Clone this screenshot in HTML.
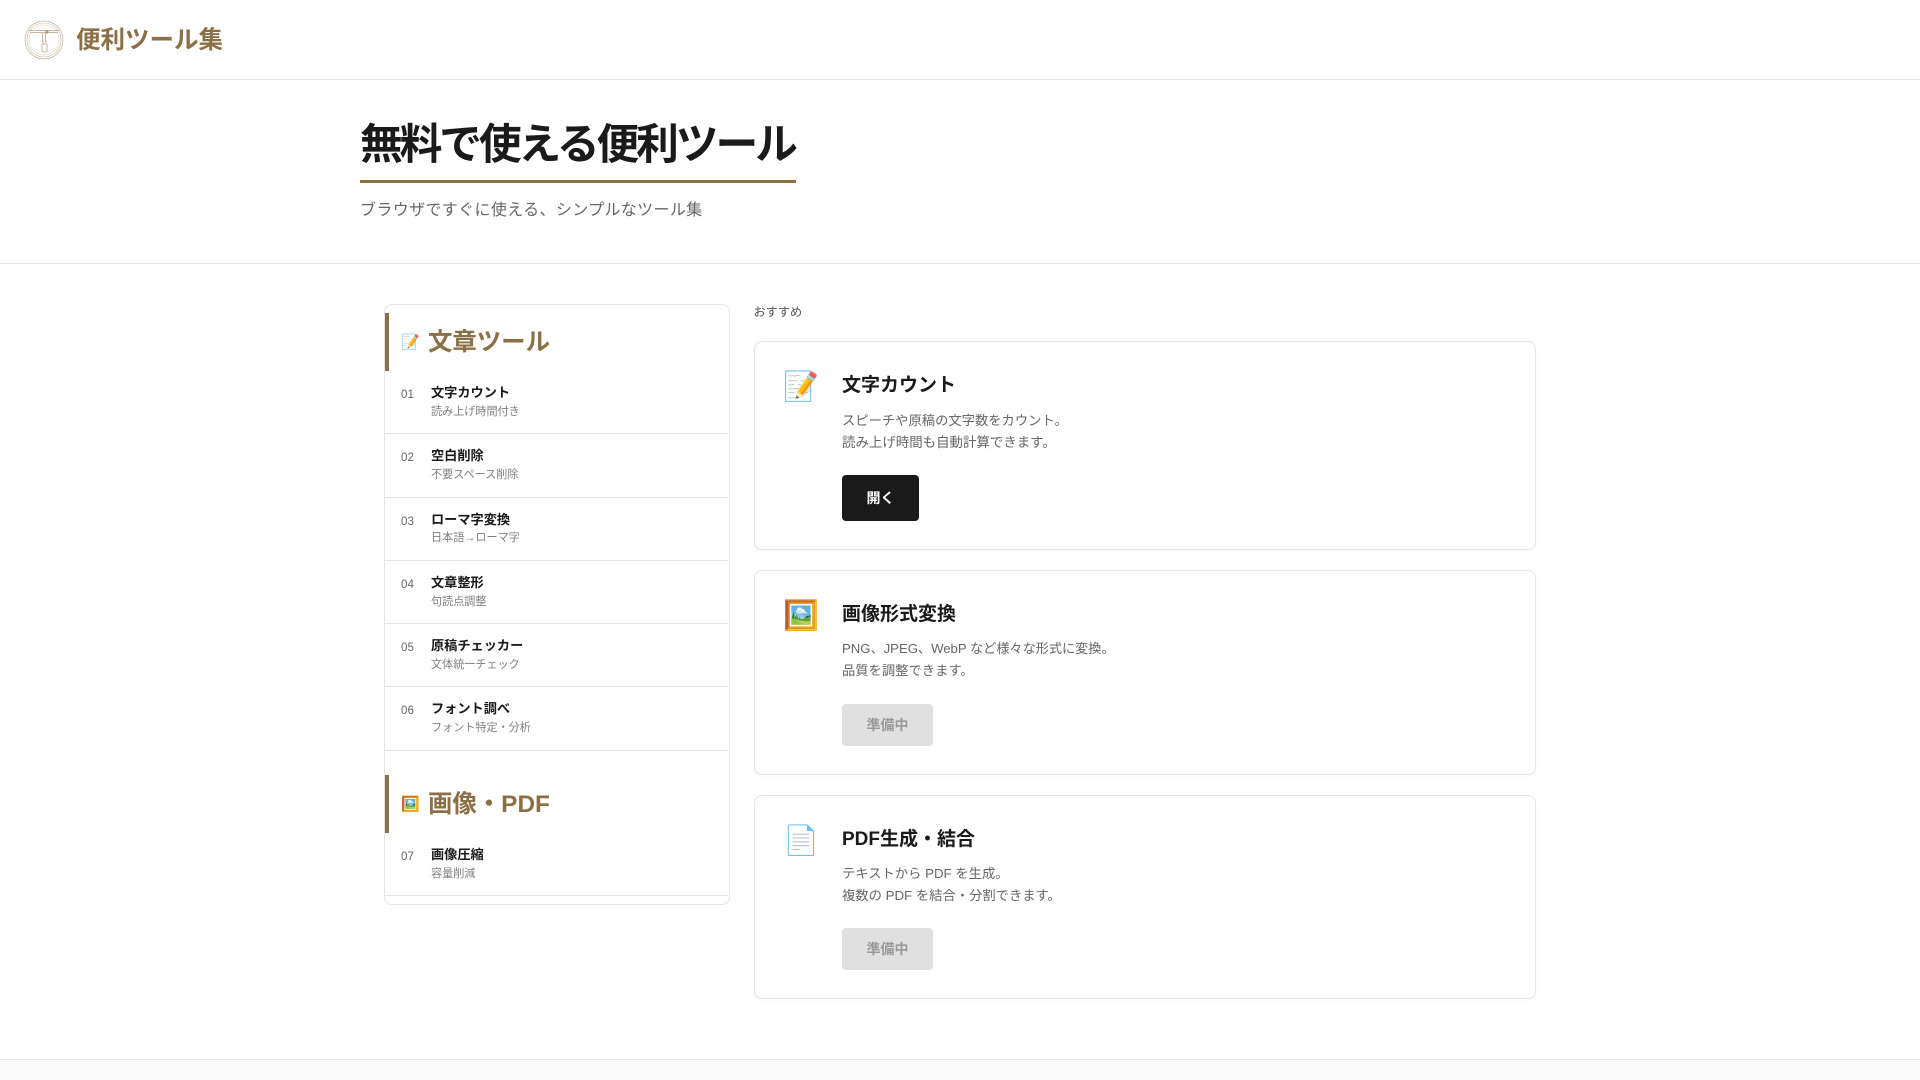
<!DOCTYPE html>
<html lang="ja">
<head>
<meta charset="utf-8">
<title>便利ツール集</title>
<style>
html,body{margin:0;padding:0;width:1920px;height:1080px;overflow:hidden;background:#fff}
body{position:relative;font-family:"Liberation Sans","Noto Sans CJK JP","Noto Color Emoji",sans-serif;color:#1a1a1a}
.a{position:absolute;white-space:nowrap}
.line{position:absolute;left:0;width:1920px;height:1px;background:#e5e5e5}
.side{position:absolute;left:384px;top:304px;width:344px;height:599px;border:1px solid #e5e5e5;border-radius:8px;background:#fff;box-sizing:content-box}
.bar{position:absolute;left:385px;width:4px;height:58px;background:#8b6f47}
.sh{color:#8b6f47;font-size:24.4px;font-weight:700;line-height:40px;left:428px}
.se{font-size:15px;line-height:20px;left:401px}
.num{left:401px;font-size:11.6px;line-height:14px;color:#666}
.nm{left:431px;font-size:13.2px;font-weight:700;line-height:18px;color:#1a1a1a}
.sb{left:431px;font-size:11.1px;line-height:16px;color:#808080}
.sep{position:absolute;left:385px;width:343px;height:1px;background:#e5e5e5}
.card{position:absolute;left:754px;width:780px;border:1px solid #e5e5e5;border-radius:8px;background:#fff;box-shadow:0 1px 3px rgba(0,0,0,.04)}
.ci{left:783px;font-size:28.8px;line-height:38px}
.ct{left:842px;font-size:19px;font-weight:700;line-height:28px;color:#1a1a1a}
.cd{left:842px;font-size:13.3px;line-height:22px;color:#666}
.btn{position:absolute;left:842px;border-radius:4px;text-align:center;font-size:14px;font-weight:700}
</style>
</head>
<body>
<svg class="a" style="left:24px;top:20px" width="40" height="40" viewBox="0 0 40 40" fill="none" stroke="#c9b89e">
<circle cx="20" cy="20" r="19" stroke-width=".8"/>
<circle cx="20" cy="20" r="17" stroke-width=".6"/>
<circle cx="20" cy="20" r="15" stroke-width=".4"/>
<path d="M5 10.5H35M6 12.5H34" stroke-width="1.1"/>
<path d="M18.5 12V22M21.5 12V22" stroke-width="1"/>
<rect x="18" y="24" width="5" height="8" rx="1" stroke-width="1.1"/>
<path d="M19 21L19 24M22 21L22 24" stroke-width=".9"/>
<circle cx="23" cy="12" r="1.6" fill="#b09a78" stroke="none"/>
</svg>
<div class="a" style="left:76px;top:25px;font-size:24.5px;font-weight:700;line-height:32px;color:#8b6f47">便利ツール集</div>
<div class="line" style="top:79px"></div>

<div class="a" style="left:360px;top:120px;font-size:42.8px;font-weight:700;line-height:50px;letter-spacing:-3.16px;color:#1a1a1a">無料で使える便利ツール</div>
<div style="position:absolute;left:360px;top:180px;width:436px;height:3px;background:#8b6f47"></div>
<div class="a" style="left:360px;top:199px;font-size:16px;line-height:24px;letter-spacing:.36px;color:#666">ブラウザですぐに使える、シンプルなツール集</div>
<div class="line" style="top:263px"></div>

<div class="side"></div>
<div class="bar" style="top:313px"></div>
<div class="a se" style="top:333px">📝</div>
<div class="a sh" style="top:323px">文章ツール</div>

<div class="a num" style="top:388px">01</div>
<div class="a nm" style="top:384px">文字カウント</div>
<div class="a sb" style="top:404px">読み上げ時間付き</div>
<div class="sep" style="top:433px"></div>

<div class="a num" style="top:451px">02</div>
<div class="a nm" style="top:447px">空白削除</div>
<div class="a sb" style="top:467px">不要スペース削除</div>
<div class="sep" style="top:497px"></div>

<div class="a num" style="top:515px">03</div>
<div class="a nm" style="top:511px">ローマ字変換</div>
<div class="a sb" style="top:530px">日本語→ローマ字</div>
<div class="sep" style="top:560px"></div>

<div class="a num" style="top:578px">04</div>
<div class="a nm" style="top:574px">文章整形</div>
<div class="a sb" style="top:594px">句読点調整</div>
<div class="sep" style="top:623px"></div>

<div class="a num" style="top:641px">05</div>
<div class="a nm" style="top:637px">原稿チェッカー</div>
<div class="a sb" style="top:657px">文体統一チェック</div>
<div class="sep" style="top:686px"></div>

<div class="a num" style="top:704px">06</div>
<div class="a nm" style="top:700px">フォント調べ</div>
<div class="a sb" style="top:720px">フォント特定・分析</div>
<div class="sep" style="top:750px"></div>

<div class="bar" style="top:775px"></div>
<div class="a se" style="top:795px">🖼️</div>
<div class="a sh" style="top:785px">画像・PDF</div>

<div class="a num" style="top:850px">07</div>
<div class="a nm" style="top:846px">画像圧縮</div>
<div class="a sb" style="top:866px">容量削減</div>
<div class="sep" style="top:895px"></div>

<div class="a" style="left:753.5px;top:304px;font-size:12.2px;line-height:16px;color:#555">おすすめ</div>

<div class="card" style="top:341px;height:207px"></div>
<div class="a ci" style="top:368px">📝</div>
<div class="a ct" style="top:372px">文字カウント</div>
<div class="a cd" style="top:410px">スピーチや原稿の文字数をカウント。</div>
<div class="a cd" style="top:432px;font-size:13.45px">読み上げ時間も自動計算できます。</div>
<div class="btn" style="top:475px;width:77px;height:46px;line-height:46px;background:#1a1a1a;color:#fff">開く</div>

<div class="card" style="top:570px;height:203px"></div>
<div class="a ci" style="top:597px">🖼️</div>
<div class="a ct" style="top:601px">画像形式変換</div>
<div class="a cd" style="top:638px;font-size:13.15px">PNG、JPEG、WebP など様々な形式に変換。</div>
<div class="a cd" style="top:660px">品質を調整できます。</div>
<div class="btn" style="top:704px;width:91px;height:42px;line-height:42px;background:#e0e0e0;color:#999">準備中</div>

<div class="card" style="top:795px;height:202px"></div>
<div class="a ci" style="top:822px">📄</div>
<div class="a ct" style="top:826px">PDF生成・結合</div>
<div class="a cd" style="top:863px">テキストから PDF を生成。</div>
<div class="a cd" style="top:885px">複数の PDF を結合・分割できます。</div>
<div class="btn" style="top:928px;width:91px;height:42px;line-height:42px;background:#e0e0e0;color:#999">準備中</div>

<div style="position:absolute;left:0;top:1059px;width:1920px;height:21px;background:#fafafa;border-top:1px solid #e5e5e5;box-sizing:border-box"></div>
</body>
</html>
